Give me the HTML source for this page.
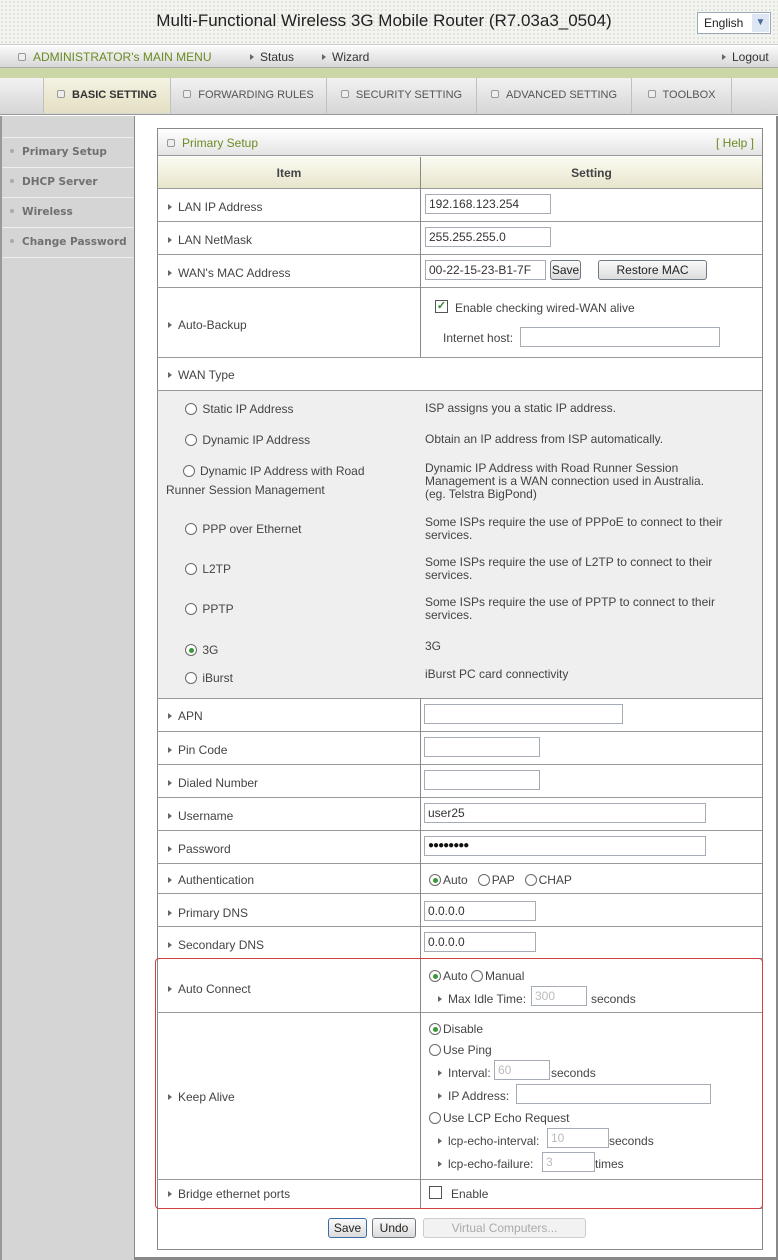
<!DOCTYPE html>
<html><head><meta charset="utf-8">
<style>
*{margin:0;padding:0;box-sizing:border-box}
body{width:778px;height:1260px;overflow:hidden;background:#fff;font-family:"Liberation Sans",Arial,sans-serif;font-size:12px;color:#444;position:relative}
.a{position:absolute;white-space:nowrap}
.tri{display:inline-block;width:0;height:0;border-left:4px solid #666;border-top:3.5px solid transparent;border-bottom:3.5px solid transparent;margin-right:6px;vertical-align:1px}
.sq{display:inline-block;width:8px;height:8px;border:1px solid #999;border-radius:2px;background:#eee;margin-right:7px;vertical-align:0}
.inp{position:absolute;height:20px;border:1px solid #a5acb5;background:#fff;font-size:12px;padding:2px 3px;color:#333;line-height:14px;white-space:nowrap}
.dis{color:#bbb}
.btn{position:absolute;height:20px;border:1px solid #6f7a86;border-radius:3px;background:linear-gradient(#fafafa,#dcdcdc);font-size:12px;text-align:center;line-height:18px;color:#222;white-space:nowrap}
.r{display:inline-block;width:12px;height:12px;border:1px solid #6a6a6a;border-radius:50%;background:#fff;vertical-align:-2px;margin-right:2px;position:relative}
.r.on::after{content:"";position:absolute;left:2.5px;top:2.5px;width:5px;height:5px;border-radius:50%;background:#3a9a3a}
.hl{position:absolute;left:157px;width:605px;height:1px;background:#999}
.lbl{position:absolute;left:168px;color:#444;white-space:nowrap}
.desc{position:absolute;left:425px;color:#444;line-height:13px;white-space:nowrap}
.sb{position:absolute;left:2px;width:132px;height:30px;border-top:1px solid #eee;font-family:"DejaVu Sans",sans-serif;font-weight:bold;font-size:10.5px;color:#707070;line-height:29px;padding-left:8px;white-space:nowrap}
.sb b{display:inline-block;width:4px;height:4px;border-radius:50%;background:#aaa;margin-right:8px;vertical-align:2px}
.tab{position:absolute;top:78px;height:35px;line-height:35px;font-size:11px;color:#555;text-align:center;border-right:1px solid #c0c0c0;white-space:nowrap}
</style></head><body>
<div class="a" style="left:0;top:0;width:778px;height:45px;background:#f3f3ef;background-image:radial-gradient(#dcdcd6 0.8px,transparent 1px);background-size:4px 4px;border-bottom:1px solid #ccc"></div>
<div class="a" style="left:0;top:11px;width:778px;text-align:center;font-size:17px;color:#222;padding-right:10px">Multi-Functional Wireless 3G Mobile Router (R7.03a3_0504)</div>
<div class="a" style="left:697px;top:12px;width:74px;height:22px;border:1px solid #9ab;background:#fff;font-size:12px;color:#222;line-height:20px;padding-left:6px">English<span class="a" style="right:1px;top:1px;width:17px;height:18px;background:#dde6f2;color:#4a6a9a;text-align:center;font-size:10px;line-height:18px">&#9660;</span></div>
<div class="a" style="left:0;top:46px;width:778px;height:22px;background:linear-gradient(#fafafa,#d8d8d8);border-bottom:1px solid #aaa"></div>
<div class="a" style="left:18px;top:50px;font-size:12px;color:#6b8c22"><span class="sq"></span>ADMINISTRATOR's MAIN MENU</div>
<div class="a" style="left:250px;top:50px;font-size:12px;color:#333"><span class="tri"></span>Status</div>
<div class="a" style="left:322px;top:50px;font-size:12px;color:#333"><span class="tri"></span>Wizard</div>
<div class="a" style="left:722px;top:50px;font-size:12px;color:#333"><span class="tri"></span>Logout</div>
<div class="a" style="left:0;top:68px;width:778px;height:10px;background:#cbd7a6"></div>
<div class="a" style="left:0;top:78px;width:778px;height:37px;background:linear-gradient(#f2f2f2,#d5d5d5);border-bottom:1px solid #999"></div>
<div class="tab" style="left:44px;width:127px;background:linear-gradient(#f4f2e2,#e4e0c4);color:#333;font-weight:bold"><span class="sq"></span>BASIC SETTING</div>
<div class="tab" style="left:171px;width:156px"><span class="sq"></span>FORWARDING RULES</div>
<div class="tab" style="left:327px;width:150px"><span class="sq"></span>SECURITY SETTING</div>
<div class="tab" style="left:477px;width:155px"><span class="sq"></span>ADVANCED SETTING</div>
<div class="tab" style="left:632px;width:100px"><span class="sq"></span>TOOLBOX</div>
<div class="a" style="left:43px;top:78px;width:1px;height:35px;background:#c0c0c0"></div>
<div class="a" style="left:0;top:116px;width:135px;height:1144px;background:#d5d5d5;border-right:1px solid #888;border-left:2px solid #999"></div>
<div class="sb" style="top:137px"><b></b>Primary Setup</div>
<div class="sb" style="top:167px"><b></b>DHCP Server</div>
<div class="sb" style="top:197px"><b></b>Wireless</div>
<div class="sb" style="top:227px"><b></b>Change Password</div>
<div class="a" style="left:2px;top:257px;width:132px;height:1px;background:#eee"></div>
<div class="a" style="left:776px;top:116px;width:2px;height:1144px;background:#888"></div>
<div class="a" style="left:157px;top:128px;width:606px;height:1122px;border:1px solid #888;background:#fff"></div>
<div class="a" style="left:158px;top:129px;width:604px;height:27px;background:linear-gradient(#fff,#e4e4e4);border-bottom:1px solid #999"></div>
<div class="a" style="left:167px;top:136px;color:#6b8c22;font-size:12px"><span class="sq"></span>Primary Setup</div>
<div class="a" style="left:716px;top:136px;color:#6b8c22;font-size:12px">[ Help ]</div>
<div class="a" style="left:158px;top:157px;width:604px;height:31px;background:linear-gradient(#fbfbf3,#e8e5cc)"></div>
<div class="a" style="left:158px;top:166px;width:262px;text-align:center;font-weight:bold;color:#444">Item</div>
<div class="a" style="left:421px;top:166px;width:341px;text-align:center;font-weight:bold;color:#444">Setting</div>
<div class="a" style="left:158px;top:390px;width:604px;height:308px;background:#efefef"></div>
<div class="hl" style="top:188px"></div><div class="hl" style="top:221px"></div><div class="hl" style="top:254px"></div><div class="hl" style="top:287px"></div>
<div class="hl" style="top:357px"></div><div class="hl" style="top:390px"></div><div class="hl" style="top:698px"></div>
<div class="hl" style="top:731px"></div><div class="hl" style="top:764px"></div><div class="hl" style="top:797px"></div><div class="hl" style="top:830px"></div>
<div class="hl" style="top:863px"></div><div class="hl" style="top:893px"></div><div class="hl" style="top:926px"></div><div class="hl" style="top:958px"></div>
<div class="hl" style="top:1012px"></div><div class="hl" style="top:1179px"></div><div class="hl" style="top:1208px"></div>
<div class="a" style="left:420px;top:157px;width:1px;height:200px;background:#888"></div>
<div class="a" style="left:420px;top:698px;width:1px;height:510px;background:#888"></div>
<div class="a" style="left:155px;top:958px;width:608px;height:251px;border:1px solid #d04040;border-radius:4px"></div>
<div class="lbl" style="top:200px"><span class="tri"></span>LAN IP Address</div>
<div class="inp" style="left:425px;top:194px;width:126px">192.168.123.254</div>
<div class="lbl" style="top:233px"><span class="tri"></span>LAN NetMask</div>
<div class="inp" style="left:425px;top:227px;width:126px">255.255.255.0</div>
<div class="lbl" style="top:266px"><span class="tri"></span>WAN's MAC Address</div>
<div class="inp" style="left:425px;top:260px;width:121px">00-22-15-23-B1-7F</div>
<div class="btn" style="left:550px;top:260px;width:31px">Save</div>
<div class="btn" style="left:598px;top:260px;width:109px">Restore MAC</div>
<div class="lbl" style="top:318px"><span class="tri"></span>Auto-Backup</div>
<div class="a" style="left:435px;top:300px;width:13px;height:13px;border:1px solid #555;background:#fff;color:#2a8a2a;font-size:11px;line-height:11px;text-align:center;font-weight:bold">&#10003;</div>
<div class="a" style="left:455px;top:301px">Enable checking wired-WAN alive</div>
<div class="a" style="left:443px;top:331px">Internet host:</div>
<div class="inp" style="left:520px;top:327px;width:200px"></div>
<div class="lbl" style="top:368px"><span class="tri"></span>WAN Type</div>
<div class="a" style="left:185px;top:402px"><span class="r"></span> Static IP Address</div>
<div class="desc" style="top:402px">ISP assigns you a static IP address.</div>
<div class="a" style="left:185px;top:433px"><span class="r"></span> Dynamic IP Address</div>
<div class="desc" style="top:433px">Obtain an IP address from ISP automatically.</div>
<div class="a" style="left:166px;top:462px;line-height:19px;width:240px">&nbsp;&nbsp;&nbsp;&nbsp;&nbsp;<span class="r"></span> Dynamic IP Address with Road<br>Runner Session Management</div>
<div class="desc" style="top:462px">Dynamic IP Address with Road Runner Session<br>Management is a WAN connection used in Australia.<br>(eg. Telstra BigPond)</div>
<div class="a" style="left:185px;top:522px"><span class="r"></span> PPP over Ethernet</div>
<div class="desc" style="top:516px">Some ISPs require the use of PPPoE to connect to their<br>services.</div>
<div class="a" style="left:185px;top:562px"><span class="r"></span> L2TP</div>
<div class="desc" style="top:556px">Some ISPs require the use of L2TP to connect to their<br>services.</div>
<div class="a" style="left:185px;top:602px"><span class="r"></span> PPTP</div>
<div class="desc" style="top:596px">Some ISPs require the use of PPTP to connect to their<br>services.</div>
<div class="a" style="left:185px;top:643px"><span class="r on"></span> 3G</div>
<div class="desc" style="top:640px">3G</div>
<div class="a" style="left:185px;top:671px"><span class="r"></span> iBurst</div>
<div class="desc" style="top:668px">iBurst PC card connectivity</div>
<div class="lbl" style="top:709px"><span class="tri"></span>APN</div>
<div class="inp" style="left:424px;top:704px;width:199px"></div>
<div class="lbl" style="top:743px"><span class="tri"></span>Pin Code</div>
<div class="inp" style="left:424px;top:737px;width:116px"></div>
<div class="lbl" style="top:776px"><span class="tri"></span>Dialed Number</div>
<div class="inp" style="left:424px;top:770px;width:116px"></div>
<div class="lbl" style="top:809px"><span class="tri"></span>Username</div>
<div class="inp" style="left:424px;top:803px;width:282px">user25</div>
<div class="lbl" style="top:842px"><span class="tri"></span>Password</div>
<div class="inp" style="left:424px;top:836px;width:282px;font-size:10px;letter-spacing:-1px;color:#111">&#9679;&#9679;&#9679;&#9679;&#9679;&#9679;&#9679;&#9679;</div>
<div class="lbl" style="top:873px"><span class="tri"></span>Authentication</div>
<div class="a" style="left:429px;top:873px"><span class="r on"></span>Auto &nbsp;&nbsp;<span class="r"></span>PAP &nbsp;&nbsp;<span class="r"></span>CHAP</div>
<div class="lbl" style="top:906px"><span class="tri"></span>Primary DNS</div>
<div class="inp" style="left:424px;top:901px;width:112px">0.0.0.0</div>
<div class="lbl" style="top:938px"><span class="tri"></span>Secondary DNS</div>
<div class="inp" style="left:424px;top:932px;width:112px">0.0.0.0</div>
<div class="lbl" style="top:982px"><span class="tri"></span>Auto Connect</div>
<div class="a" style="left:429px;top:969px"><span class="r on"></span>Auto <span class="r"></span>Manual</div>
<div class="a" style="left:438px;top:992px"><span class="tri"></span>Max Idle Time:</div>
<div class="inp dis" style="left:531px;top:986px;width:56px">300</div>
<div class="a" style="left:591px;top:992px">seconds</div>
<div class="lbl" style="top:1090px"><span class="tri"></span>Keep Alive</div>
<div class="a" style="left:429px;top:1022px"><span class="r on"></span>Disable</div>
<div class="a" style="left:429px;top:1043px"><span class="r"></span>Use Ping</div>
<div class="a" style="left:438px;top:1066px"><span class="tri"></span>Interval:</div>
<div class="inp dis" style="left:494px;top:1060px;width:56px">60</div>
<div class="a" style="left:551px;top:1066px">seconds</div>
<div class="a" style="left:438px;top:1089px"><span class="tri"></span>IP Address:</div>
<div class="inp" style="left:516px;top:1084px;width:195px"></div>
<div class="a" style="left:429px;top:1111px"><span class="r"></span>Use LCP Echo Request</div>
<div class="a" style="left:438px;top:1134px"><span class="tri"></span>lcp-echo-interval:</div>
<div class="inp dis" style="left:547px;top:1128px;width:62px">10</div>
<div class="a" style="left:609px;top:1134px">seconds</div>
<div class="a" style="left:438px;top:1157px"><span class="tri"></span>lcp-echo-failure:</div>
<div class="inp dis" style="left:542px;top:1152px;width:53px">3</div>
<div class="a" style="left:595px;top:1157px">times</div>
<div class="lbl" style="top:1187px"><span class="tri"></span>Bridge ethernet ports</div>
<div class="a" style="left:429px;top:1186px;width:13px;height:13px;border:1px solid #555;background:#fff"></div>
<div class="a" style="left:451px;top:1187px">Enable</div>
<div class="btn" style="left:328px;top:1218px;width:39px;border-color:#3a6aa8">Save</div>
<div class="btn" style="left:372px;top:1218px;width:44px">Undo</div>
<div class="btn" style="left:423px;top:1218px;width:163px;color:#aaa;border-color:#ccc;background:#f2f2f2">Virtual Computers...</div>
<div class="a" style="left:134px;top:1257px;width:644px;height:3px;background:#888"></div>
</body></html>
